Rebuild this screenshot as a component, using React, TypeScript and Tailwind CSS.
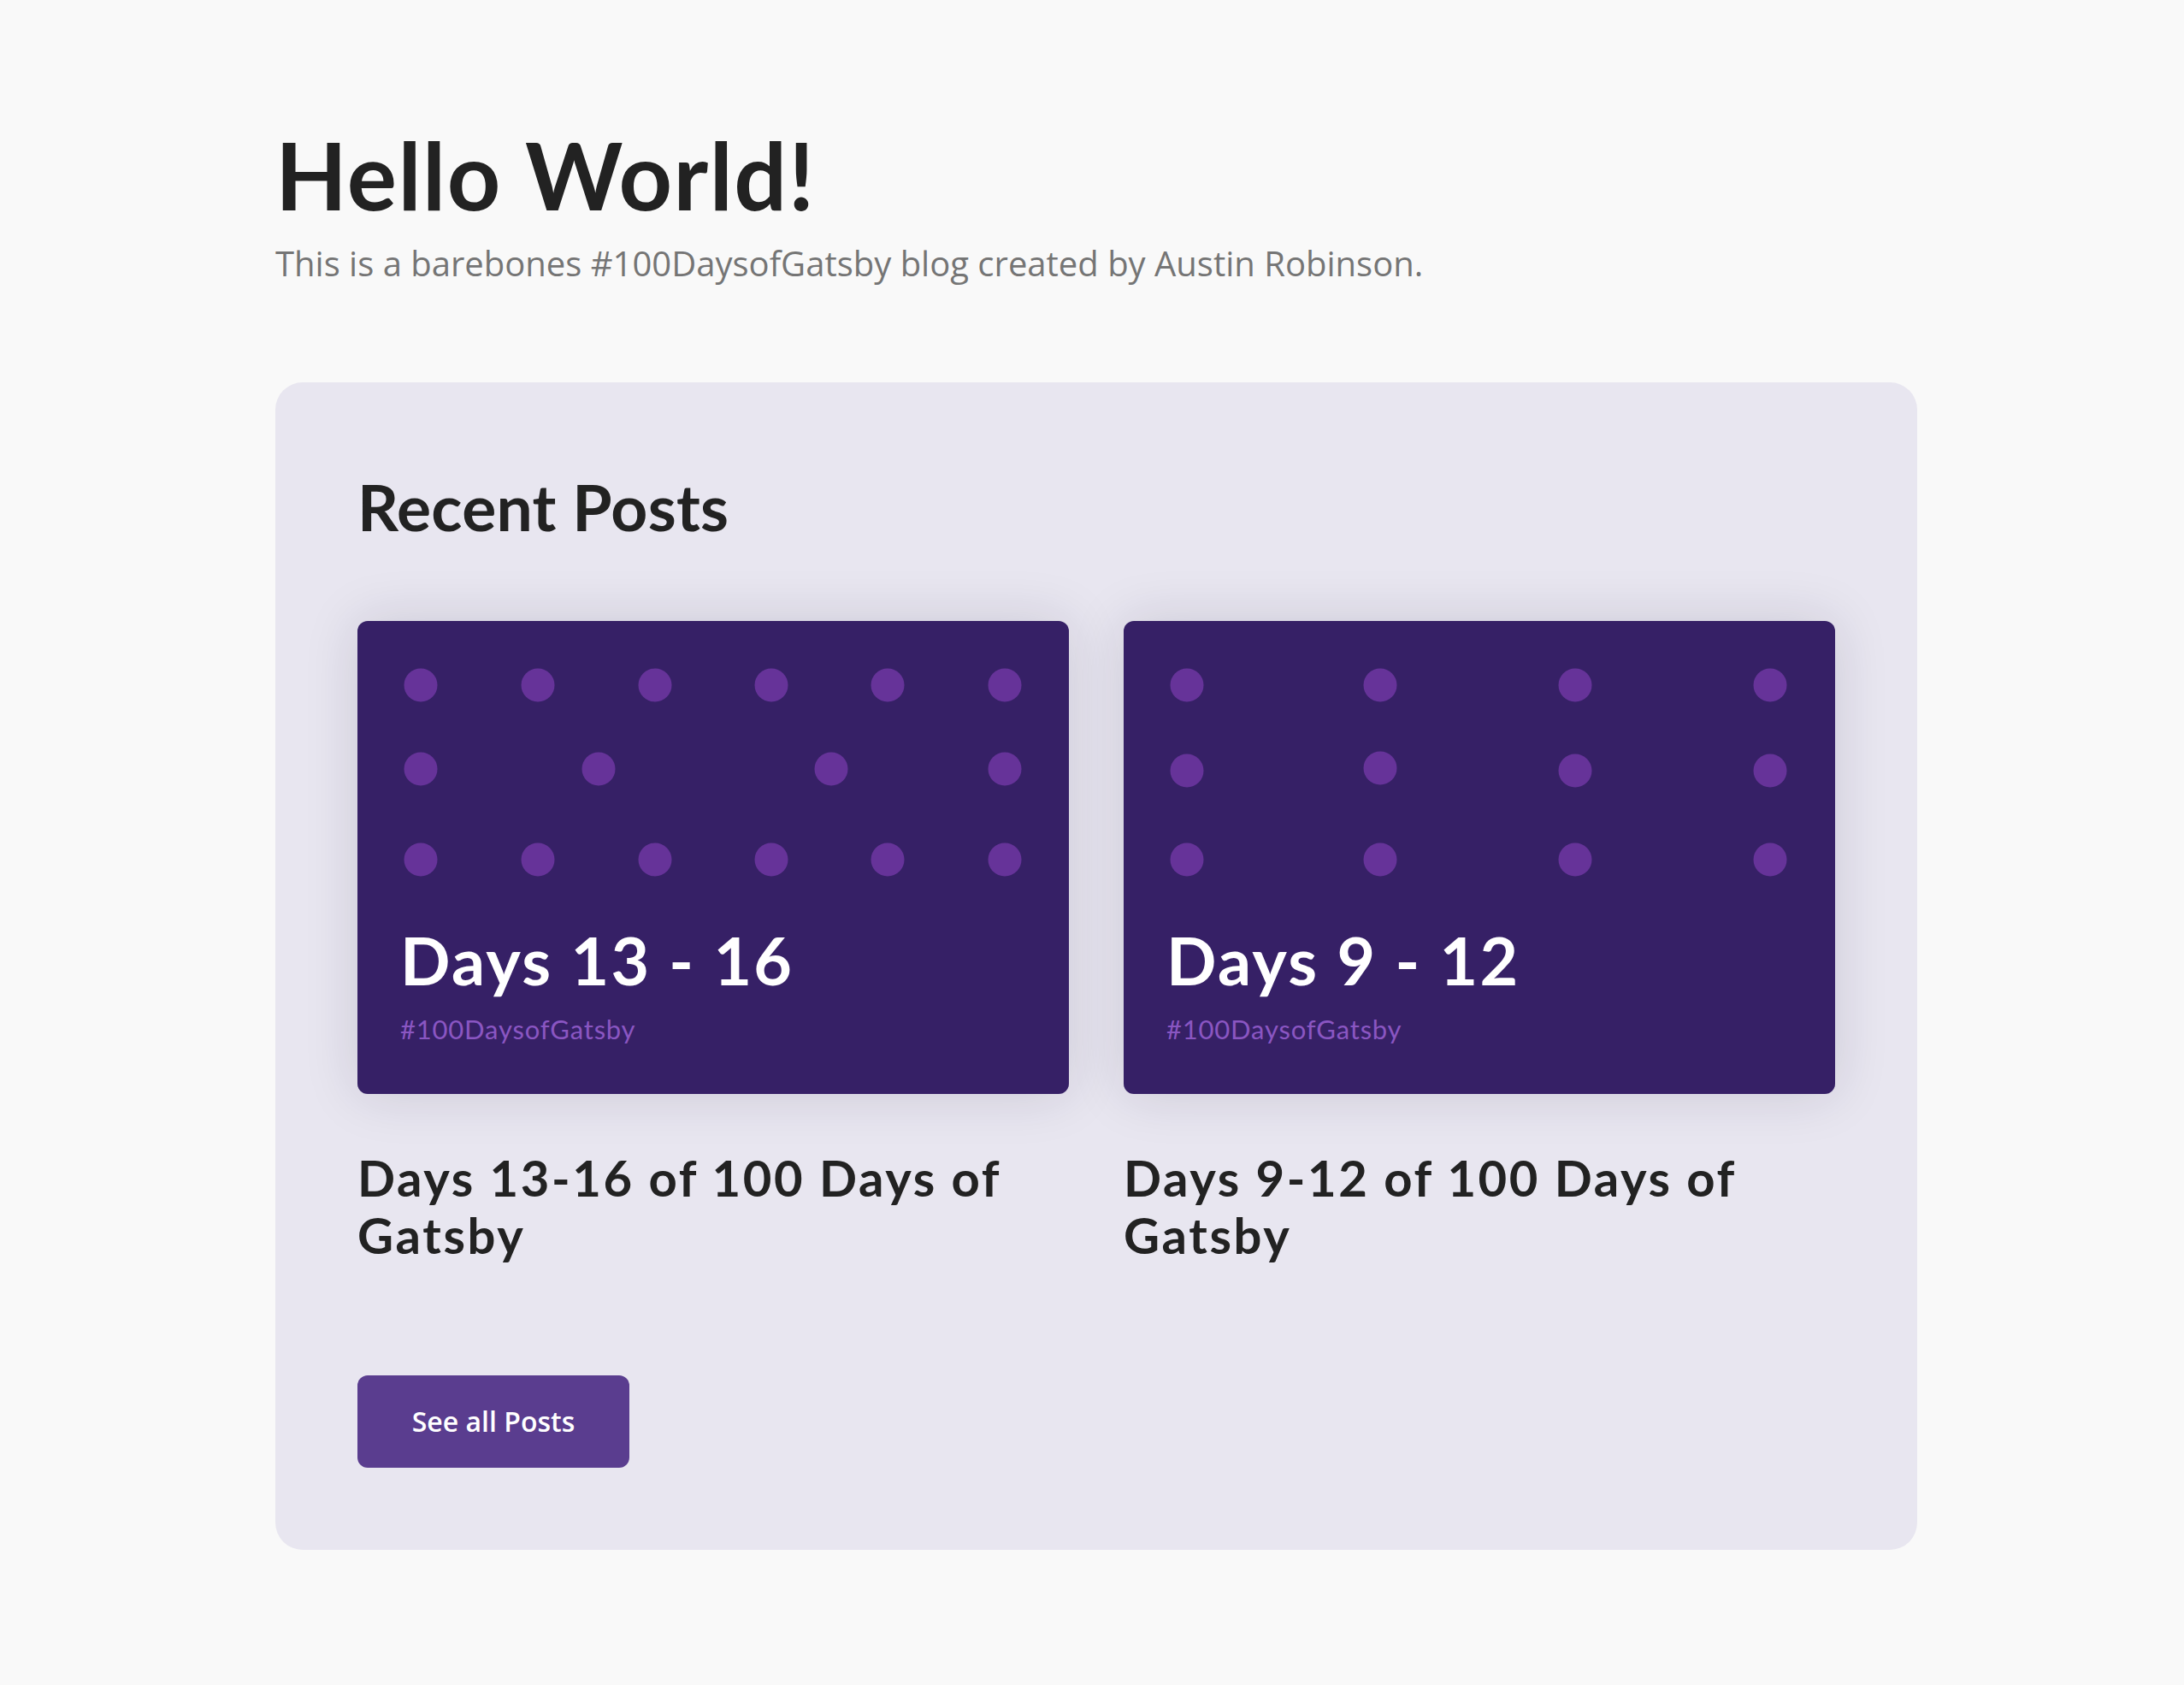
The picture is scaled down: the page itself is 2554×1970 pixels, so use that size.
import React from "react"

type Dot = [number, number]

const posts = [
  {
    label: "Days 13 - 16",
    title: "Days 13-16 of 100 Days of Gatsby",
    dots: [
      [74, 75], [211, 75], [348, 75], [484, 75], [620, 75], [757, 75],
      [74, 173], [282, 173], [554, 173], [757, 173],
      [74, 279], [211, 279], [348, 279], [484, 279], [620, 279], [757, 279],
    ] as Dot[],
  },
  {
    label: "Days 9 - 12",
    title: "Days 9-12 of 100 Days of Gatsby",
    dots: [
      [74, 75], [300, 75], [528, 75], [756, 75],
      [74, 175], [300, 172], [528, 175], [756, 175],
      [74, 279], [300, 279], [528, 279], [756, 279],
    ] as Dot[],
  },
]

const heading = { fontFamily: "Lato, 'Liberation Sans', sans-serif" }
const body = { fontFamily: "'Open Sans', 'Liberation Sans', sans-serif" }

function PostCard({ label, title, dots }: { label: string; title: string; dots: Dot[] }) {
  return (
    <div className="flex flex-col">
      {/* cover image */}
      <div className="relative h-[553px] rounded-[12px] bg-[#362066] shadow-[0_0_64px_rgba(30,20,60,0.14)] overflow-hidden">
        <svg className="absolute inset-0" width="832" height="553" viewBox="0 0 832 553">
          {dots.map(([cx, cy], i) => (
            <circle key={i} cx={cx} cy={cy} r="19.5" fill="#663399" />
          ))}
        </svg>
        <div className="relative flex h-full flex-col justify-end pl-[50px] pb-[60px]" style={heading}>
          <div className="text-[77px] leading-none font-bold text-white tracking-[2.3px]">{label}</div>
          <div className="mt-[27px] text-[31px] leading-none text-[#8a56c2] tracking-[0.8px]">#100DaysofGatsby</div>
        </div>
      </div>
      <h3
        className="mt-[64px] text-[58px] leading-[67px] font-bold text-[#222222] tracking-[2.6px]"
        style={heading}
      >
        {title}
      </h3>
    </div>
  )
}

export default function App() {
  return (
    <div className="min-h-screen bg-[#f9f9f9] pt-[149px] pb-[158px]">
      <div className="ml-[322px] w-[1920px]">
        {/* Header section */}
        <h1 className="text-[109px] leading-none font-bold text-[#222222] tracking-[1.5px]" style={heading}>
          Hello World!
        </h1>
        <p className="mt-[21px] text-[40px] leading-[57px] text-[#757575]" style={body}>
          This is a barebones #100DaysofGatsby blog created by Austin Robinson.
        </p>

        {/* Recent posts */}
        <section className="mt-[111px] rounded-[32px] bg-[#e8e6f0] px-[96px] pt-[108px] pb-[96px]">
          <h2 className="text-[75px] leading-none font-bold text-[#222222] tracking-[0.3px]" style={heading}>
            Recent Posts
          </h2>
          <div className="mt-[96px] grid grid-cols-2 gap-[64px]">
            {posts.map((p) => (
              <PostCard key={p.label} {...p} />
            ))}
          </div>
          <button
            className="mt-[131px] h-[108px] w-[318px] rounded-[12px] bg-[#5a3d8f] text-[32px] font-semibold text-white"
            style={body}
          >
            See all Posts
          </button>
        </section>
      </div>
    </div>
  )
}
